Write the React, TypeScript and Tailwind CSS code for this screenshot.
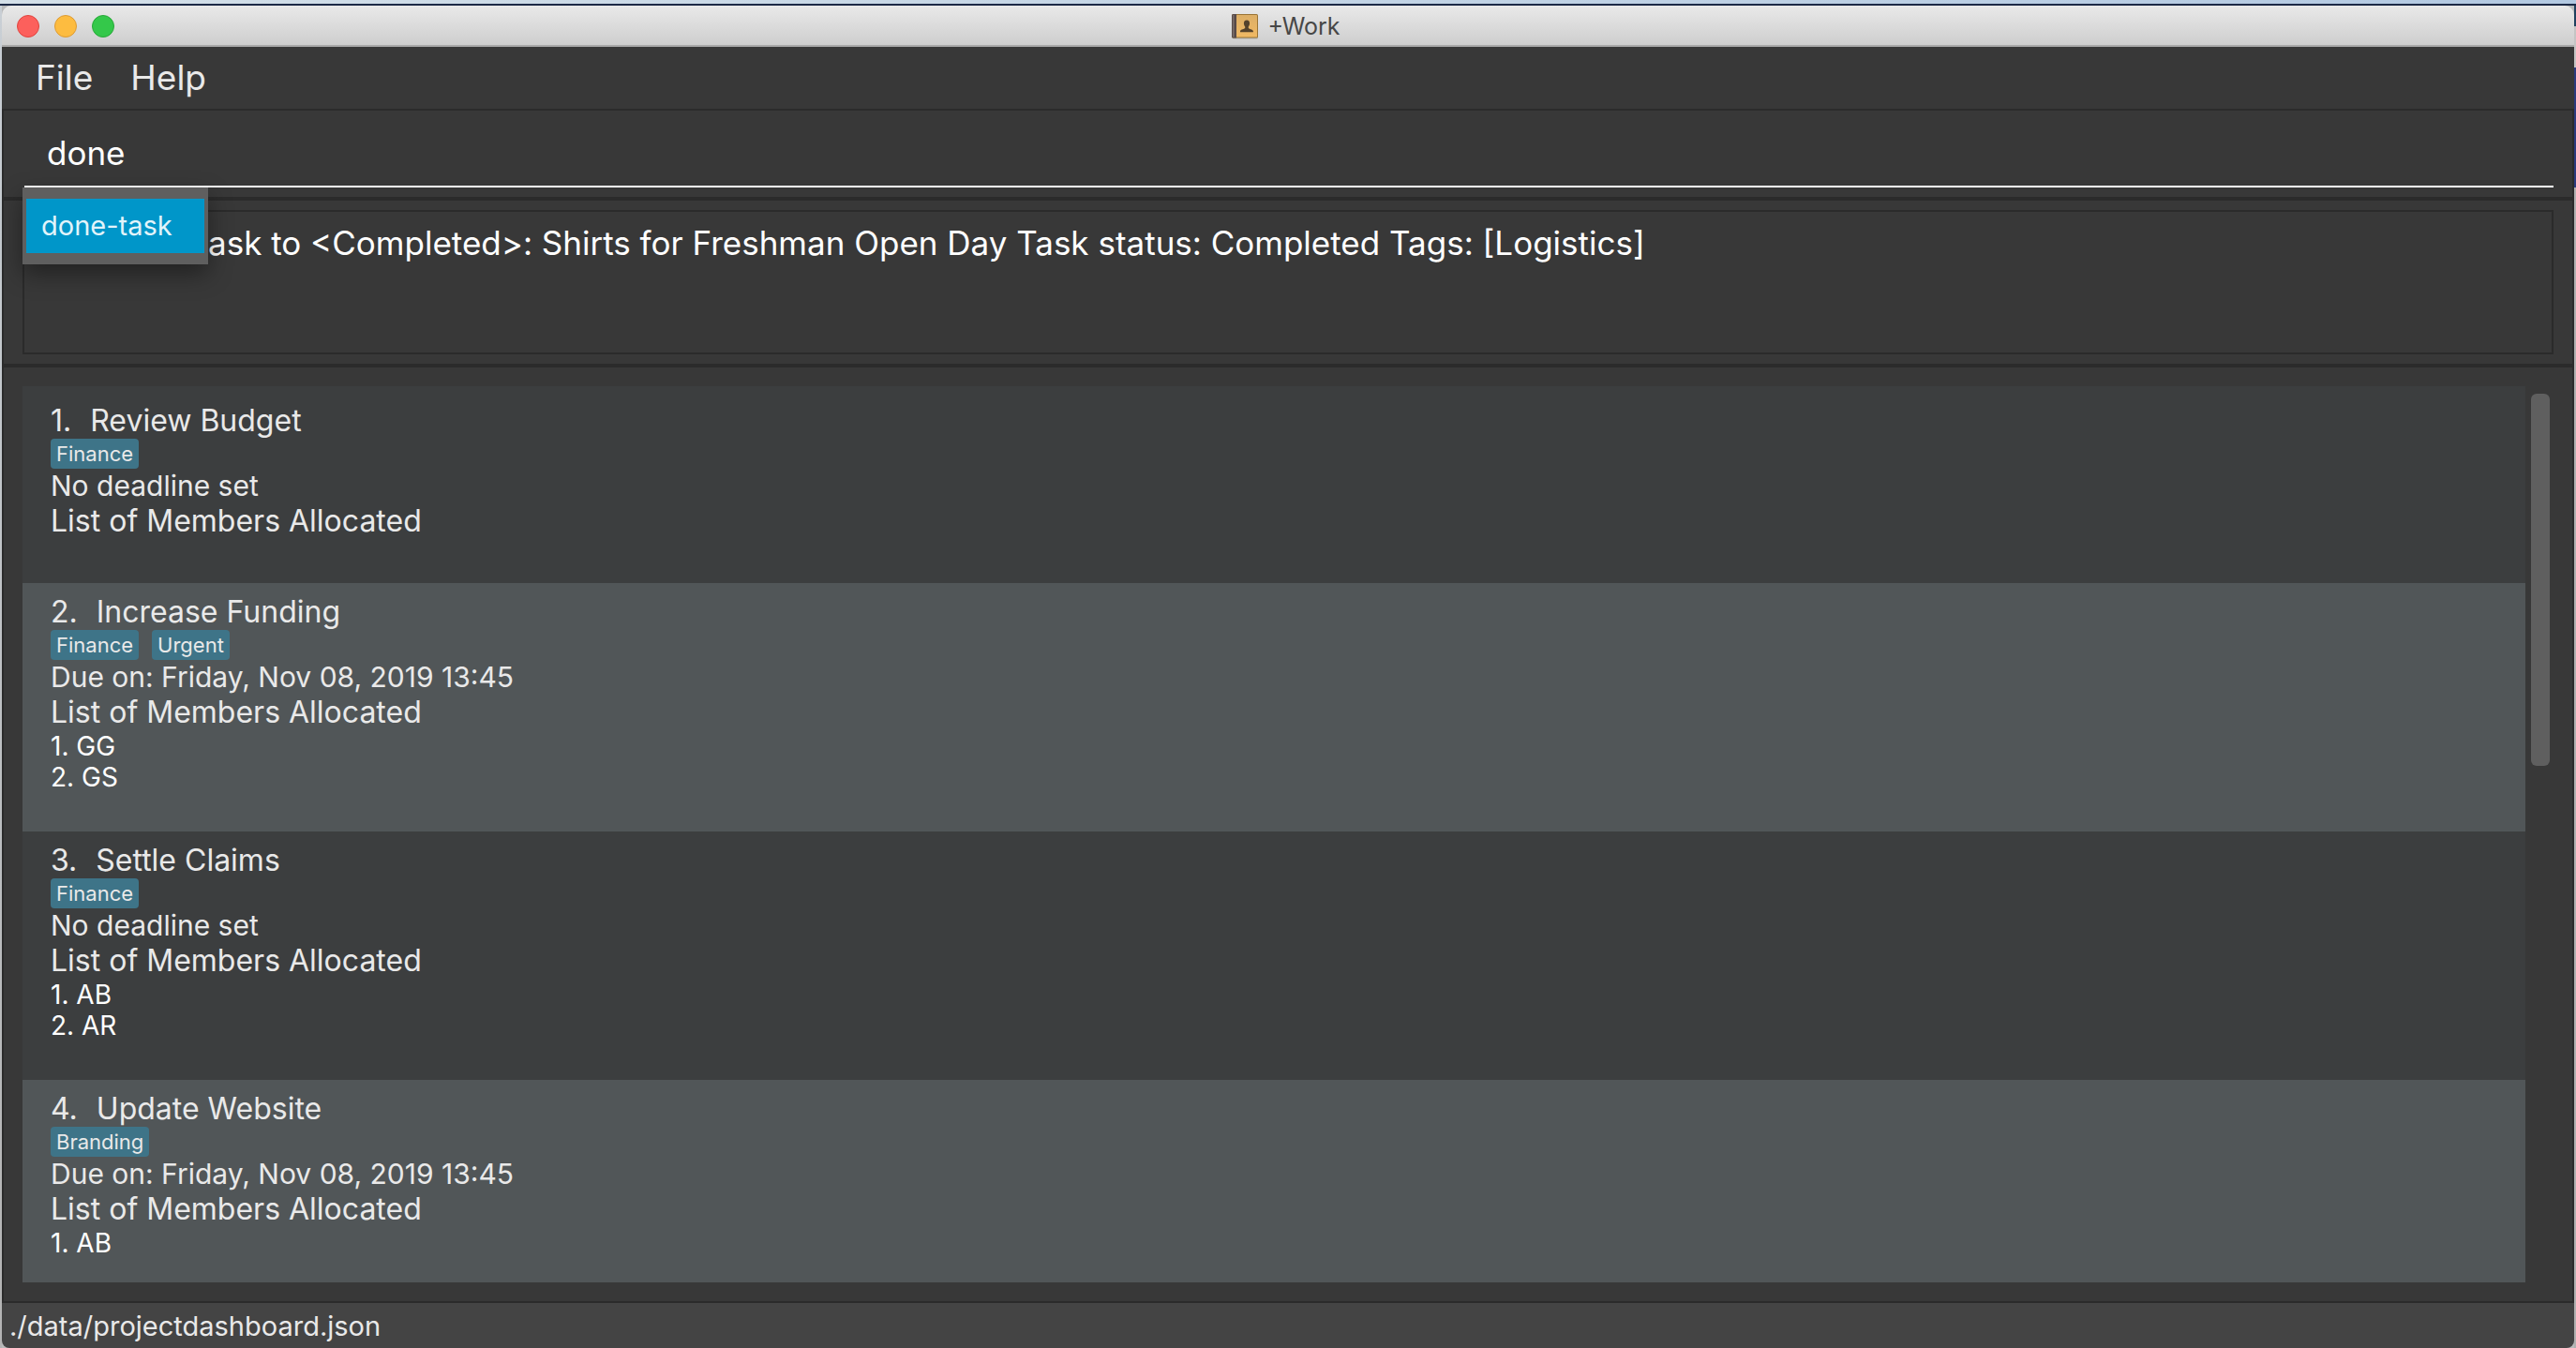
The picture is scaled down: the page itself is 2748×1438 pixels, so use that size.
import React, { useState } from 'react';

type Task = {
  id: number;
  name: string;
  tags: string[];
  deadline: string;
  members: string[];
};

const tasks: Task[] = [
  { id: 1, name: 'Review Budget', tags: ['Finance'], deadline: 'No deadline set', members: [] },
  {
    id: 2,
    name: 'Increase Funding',
    tags: ['Finance', 'Urgent'],
    deadline: 'Due on: Friday, Nov 08, 2019 13:45',
    members: ['GG', 'GS'],
  },
  { id: 3, name: 'Settle Claims', tags: ['Finance'], deadline: 'No deadline set', members: ['AB', 'AR'] },
  {
    id: 4,
    name: 'Update Website',
    tags: ['Branding'],
    deadline: 'Due on: Friday, Nov 08, 2019 13:45',
    members: ['AB'],
  },
];

function BookIcon() {
  return (
    <svg width="28" height="28" viewBox="0 0 28 28" aria-hidden="true">
      <defs>
        <linearGradient id="cover" x1="0" y1="0" x2="0" y2="1">
          <stop offset="0" stopColor="#dcae66" />
          <stop offset="1" stopColor="#f0b964" />
        </linearGradient>
      </defs>
      <rect x="1" y="2" width="27" height="25.5" rx="1.5" fill="#8f8f8f" opacity="0.5" />
      <rect x="0" y="1" width="28" height="25.5" rx="1.5" fill="#9a7434" />
      <rect x="5" y="2" width="22" height="23.5" rx="0.5" fill="url(#cover)" />
      <path d="M1.5 1H5v25.5H1.5A1.5 1.5 0 0 1 0 25V2.500A1.500 1.500 0 0 1 1.500 1z" fill="#574a48" />
      <rect x="1" y="2" width="1.500" height="23.500" fill="#7b6e6a" />
      <path
        d="M16 7.500c2.200 0 3.200 1.500 3.100 3.600-.1 1.500-.6 2.500-1.300 3.300v1.500c.3.900 4.700 1.200 5.100 3.300v1H9v-1c.4-2.100 4.900-2.400 5.200-3.300v-1.500c-.7-.8-1.200-1.800-1.300-3.300-.1-2.100.9-3.600 3.100-3.600z"
        fill="#54422c"
      />
    </svg>
  );
}

function TitleBar() {
  return (
    <header className="grid h-11 shrink-0 grid-cols-3 items-center rounded-t-[10px] border-b-2 border-[#a8a8a8] bg-linear-to-b from-[#e9e9e9] to-[#cecece] pt-0.5">
      <div className="flex gap-4 pl-4">
        <button aria-label="Close" className="size-6 rounded-full border border-[#e0443e] bg-[#fc605c]" />
        <button aria-label="Minimize" className="size-6 rounded-full border border-[#dd9b33] bg-[#fdbc40]" />
        <button aria-label="Zoom" className="size-6 rounded-full border border-[#27a838] bg-[#34c84a]" />
      </div>
      <div className="flex items-center justify-center gap-[10px] pr-1">
        <BookIcon />
        <h1 className="text-[25px] leading-8 text-[#474747]">+Work</h1>
      </div>
    </header>
  );
}

function TaskCard({ task }: { task: Task }) {
  return (
    <li className="px-[30px] pt-3 pb-[41px] text-[#e9e9e9] first:pt-[18px] odd:bg-[#3c3e3f] even:bg-[#515658]">
      <h2 className="flex gap-5 text-[32px] leading-[38px]">
        <span>{task.id}.</span>
        <span>{task.name}</span>
      </h2>
      <div className="flex gap-[14px]">
        {task.tags.map((tag) => (
          <span key={tag} className="rounded-sm bg-[#3e7488] px-[6px] text-[22px] leading-8">
            {tag}
          </span>
        ))}
      </div>
      <p className="text-[30px] leading-9">{task.deadline}</p>
      <p className="text-[32px] leading-10">List of Members Allocated</p>
      <ul className="min-h-[5px] text-[28px] leading-[33px] text-white">
        {task.members.map((member, i) => (
          <li key={member}>
            {i + 1}. {member}
          </li>
        ))}
      </ul>
    </li>
  );
}

export default function App() {
  const [command, setCommand] = useState('done');

  return (
    <div className="flex h-screen flex-col bg-[#b9babb] font-['Inter',sans-serif]">
      <div className="h-1 shrink-0 bg-linear-to-r from-[#d3dfe8] to-[#b3c9e2]" />
      <div className="h-0.5 shrink-0 bg-[#1c2946]" />
      <div className="flex min-h-0 flex-1">
        <div className="w-0.5 bg-linear-to-b from-[#c9cfd5] to-[#b4b4b4]" />
        <div className="flex min-w-0 flex-1 flex-col">
          <TitleBar />
          <nav className="flex h-[66px] shrink-0 items-center gap-10 bg-[#383838] pl-9 text-[37px] text-[#e9e9e9]">
            <button>File</button>
            <button>Help</button>
          </nav>

          <section className="relative z-10 shrink-0 border-2 border-[#2b2b2b] bg-[#383838] px-5 py-[10px]">
            <div className="pl-0.5">
              <input
                type="text"
                aria-label="Command"
                value={command}
                onChange={(e) => setCommand(e.target.value)}
                className="block h-[72px] w-full border-b-2 border-white bg-transparent px-6 text-[35px] text-white outline-none"
              />
            </div>
            <ul
              role="listbox"
              aria-label="Suggestions"
              className="absolute top-[82px] left-5 w-[198px] bg-[#5f5f5f] px-1 py-3 shadow-[0_10px_24px_rgba(0,0,0,0.4)]"
            >
              <li
                role="option"
                aria-selected="true"
                className="bg-[#0096c9] pl-4 text-[29px] leading-[58px] text-[#e2f4fa]"
              >
                done-task
              </li>
            </ul>
          </section>

          <section className="shrink-0 border-2 border-[#2b2b2b] bg-[#383838] px-5 py-[10px]">
            <div className="h-[154px] border-2 border-[#2b2b2b] pt-3 pl-[196px] text-[35px] leading-[42px] text-white">
              ask to &lt;Completed&gt;: Shirts for Freshman Open Day Task status: Completed Tags: [Logistics]
            </div>
          </section>

          <main className="flex min-h-0 flex-1 border-2 border-[#2b2b2b] bg-[#383838] p-5">
            <ul className="min-w-0 flex-1 overflow-hidden">
              {tasks.map((task) => (
                <TaskCard key={task.id} task={task} />
              ))}
            </ul>
            <div className="mx-1 w-[22px] pt-2 pl-0.5">
              <div className="h-[397px] rounded-md bg-[#5f5f5f]" />
            </div>
          </main>

          <footer className="shrink-0 rounded-b-lg bg-[#444444] pt-0.5 pl-2 text-[29px] leading-[46px] text-[#e9e9e9]">
            ./data/projectdashboard.json
          </footer>
        </div>
        <div className="flex w-0.5 flex-col">
          <div className="h-[22px] bg-[#20415f]" />
          <div className="h-11 bg-[#c4c4c4]" />
          <div className="h-32 bg-[#2b3a7d]" />
          <div className="flex-1 bg-[#b0b0b0]" />
        </div>
      </div>
    </div>
  );
}
